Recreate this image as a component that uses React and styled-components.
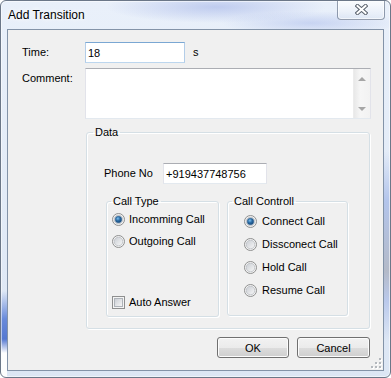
import React, { useId } from "react";
import styled, { createGlobalStyle, css } from "styled-components";

const GlobalStyle = createGlobalStyle`
  html, body { margin: 0; padding: 0; }
  body { background: #ffffff; font-family: "Liberation Sans", Arial, sans-serif; }
  * { box-sizing: border-box; }
`;

const Window = styled.div`
  width: 391px;
  height: 378px;
  border: 1px solid #6b7788;
  border-radius: 6px;
  overflow: hidden;
  display: flex;
  flex-direction: column;
  background:
    linear-gradient(180deg, rgba(255,255,255,0) 290px, rgba(84,122,214,0.85) 318px, rgba(70,108,205,0.9) 338px, rgba(255,255,255,0.95) 352px) 0 0 / 6px 100% no-repeat,
    linear-gradient(180deg, rgba(255,255,255,0) 150px, rgba(140,165,225,0.55) 200px, rgba(150,155,170,0.6) 270px, rgba(150,170,225,0.5) 300px, rgba(255,255,255,0) 340px) 100% 0 / 6px 100% no-repeat,
    radial-gradient(ellipse 110px 16px at 215px 6px, rgba(150,168,228,0.5), rgba(150,168,228,0)),
    radial-gradient(ellipse 90px 12px at 310px 22px, rgba(160,178,232,0.45), rgba(160,178,232,0)),
    linear-gradient(180deg, #e9f0fa 0%, #dce6f4 100%);
  box-shadow: inset 0 0 0 1px rgba(255,255,255,0.55);
`;

const TitleBar = styled.div`
  height: 28px;
  flex: none;
  display: flex;
  align-items: center;
  justify-content: space-between;
  padding-left: 7px;
`;

const Title = styled.span`
  font-size: 12px;
  line-height: 15px;
  color: #000;
  text-shadow: 0 0 7px #fff, 0 0 4px #fff;
`;

const CloseButton = styled.div`
  align-self: flex-start;
  margin-top: -1px;
  margin-right: 5px;
  width: 48px;
  height: 20px;
  border: 1px solid rgba(80, 95, 120, 0.6);
  border-top: none;
  border-radius: 0 0 4px 4px;
  background: linear-gradient(180deg, rgba(255,255,255,0.8), rgba(222,231,244,0.65));
  box-shadow: inset 0 0 0 1px rgba(255,255,255,0.6);
  display: flex;
  align-items: center;
  justify-content: center;
`;

const Client = styled.div`
  position: relative;
  flex: 1;
  margin: 0 6px 6px;
  border: 1px solid #8393a8;
  background: #f0f0f0;
  padding: 12px 13px 0 14px;
  display: flex;
  flex-direction: column;
  font-size: 11px;
  color: #000;
`;

const FieldRow = styled.div`
  display: flex;
  align-items: ${(p) => (p.$top ? "flex-start" : "center")};
  margin-top: ${(p) => p.$mt || 0}px;
`;

const Label = styled.span`
  flex: none;
  width: ${(p) => p.$w}px;
  padding-top: ${(p) => p.$pt || 0}px;
  font-size: 11px;
  line-height: 13px;
  white-space: nowrap;
`;

const Unit = styled.span`
  margin-left: 8px;
  font-size: 11px;
  line-height: 13px;
`;

const TextBox = styled.input`
  flex: none;
  width: ${(p) => p.$w}px;
  height: ${(p) => p.$h}px;
  margin: 0;
  padding: 0 2px;
  border: 1px solid;
  border-color: #abadb3 #e2e3ea #e3e9ef #e2e3ea;
  background: #fff;
  font: 11px "Liberation Sans", Arial, sans-serif;
  color: #000;
  outline: none;
  ${(p) =>
    p.$focused &&
    css`
      border-color: #7aa7d3 #b3cde8 #bcd6ee #b3cde8;
    `}
`;

const CommentBox = styled.div`
  flex: none;
  width: 286px;
  height: 51px;
  border: 1px solid;
  border-color: #abadb3 #e2e3ea #e3e9ef #e2e3ea;
  background: #fff;
  display: flex;
  justify-content: flex-end;
`;

const ScrollBar = styled.div`
  width: 17px;
  height: 100%;
  background: linear-gradient(90deg, #e8e8e8, #f6f6f6 40%, #f2f2f2);
  border-left: 1px solid #ececec;
  display: flex;
  flex-direction: column;
  justify-content: space-between;
  align-items: center;
  padding: 8px 0 7px;
`;

const Arrow = styled.span`
  width: 0;
  height: 0;
  border-left: 4px solid transparent;
  border-right: 4px solid transparent;
  ${(p) =>
    p.$down
      ? css`border-top: 4px solid #a6a6a6;`
      : css`border-bottom: 4px solid #a6a6a6;`}
`;

const GroupBox = styled.fieldset`
  flex: none;
  margin: ${(p) => p.$margin || 0};
  padding: 0;
  min-width: 0;
  width: ${(p) => p.$w}px;
  border: 1px solid #d5dfe5;
  border-radius: 3px;
  box-shadow: inset 1px 1px 0 #ffffff, 1px 1px 0 #ffffff;
`;

const Legend = styled.legend`
  margin-left: ${(p) => p.$ml}px;
  padding: 0 2px;
  font-size: 11px;
  line-height: 13px;
  color: #000;
`;

const GroupBody = styled.div`
  display: flex;
  flex-direction: column;
  padding: ${(p) => p.$pad};
  height: ${(p) => (p.$h ? `${p.$h}px` : "auto")};
  gap: ${(p) => p.$gap || 0}px;
`;

const GroupsRow = styled.div`
  display: flex;
  align-items: flex-start;
  gap: 8px;
  margin: 11px 0 0 2px;
`;

const OptionRow = styled.label`
  display: flex;
  align-items: center;
  height: 16px;
  gap: ${(p) => p.$gap}px;
  font-size: 11px;
  line-height: 13px;
  white-space: nowrap;
  ${(p) =>
    p.$bottom &&
    css`
      margin-top: auto;
    `}
`;

const CheckFrame = styled.span`
  flex: none;
  width: 13px;
  height: 13px;
  border: 1px solid #8e8f8f;
  background: #f4f4f4;
  padding: 1px;
  display: flex;
`;

const CheckInner = styled.span`
  flex: 1;
  border: 1px solid #aeb3b9;
  background: linear-gradient(135deg, #cbcfd5, #f6f6f6);
`;

const ButtonRow = styled.div`
  display: flex;
  justify-content: flex-end;
  gap: 8px;
  margin-top: 8px;
`;

const Button = styled.button`
  width: ${(p) => p.$w}px;
  height: 21px;
  margin: 0;
  padding: 0;
  border: 1px solid #707070;
  border-radius: 3px;
  background: linear-gradient(180deg, #f2f2f2 0%, #ebebeb 50%, #dddddd 50%, #cfcfcf 100%);
  box-shadow: inset 0 0 0 1px #fcfcfc;
  font: 11px "Liberation Sans", Arial, sans-serif;
  color: #000;
`;

const Grip = styled.div`
  position: absolute;
  right: 1px;
  bottom: 1px;
  line-height: 0;
`;

function RadioMark({ checked }) {
  const id = useId().replace(/:/g, "");
  return (
    <svg width="13" height="13" viewBox="0 0 13 13" style={{ flex: "none" }}>
      <defs>
        <linearGradient id={`f${id}`} x1="0" y1="0" x2="1" y2="1">
          <stop offset="0" stopColor="#c9cdd3" />
          <stop offset="1" stopColor="#f8f8f8" />
        </linearGradient>
        <radialGradient id={`d${id}`} cx="0.4" cy="0.35" r="0.75">
          <stop offset="0" stopColor="#7fc0ee" />
          <stop offset="0.45" stopColor="#2a6ca6" />
          <stop offset="1" stopColor="#163f6d" />
        </radialGradient>
      </defs>
      <circle cx="6.5" cy="6.5" r="6" fill="#f4f4f4" stroke="#8e8f8f" />
      <circle cx="6.5" cy="6.5" r="4.3" fill={`url(#f${id})`} stroke="#b9bdc2" strokeWidth="0.8" />
      {checked && <circle cx="6.5" cy="6.5" r="3.2" fill={`url(#d${id})`} stroke="#2a5f91" strokeWidth="0.6" />}
    </svg>
  );
}

function Radio({ checked, label, gap }) {
  return (
    <OptionRow $gap={gap}>
      <RadioMark checked={checked} />
      {label}
    </OptionRow>
  );
}

export default function App() {
  return (
    <>
      <GlobalStyle />
      <Window>
        <TitleBar>
          <Title>Add Transition</Title>
          <CloseButton>
            <svg width="13" height="11" viewBox="0 0 13 11">
              <path d="M2.5 2 L10.5 9 M10.5 2 L2.5 9" stroke="#5b636e" strokeWidth="4" strokeLinecap="square" fill="none" />
              <path d="M2.5 2 L10.5 9 M10.5 2 L2.5 9" stroke="#ffffff" strokeWidth="2" strokeLinecap="square" fill="none" />
            </svg>
          </CloseButton>
        </TitleBar>
        <Client>
          <FieldRow>
            <Label $w={63}>Time:</Label>
            <TextBox $w={100} $h={21} $focused readOnly value="18" />
            <Unit>s</Unit>
          </FieldRow>
          <FieldRow $top $mt={5}>
            <Label $w={63} $pt={4}>Comment:</Label>
            <CommentBox>
              <ScrollBar>
                <Arrow />
                <Arrow $down />
              </ScrollBar>
            </CommentBox>
          </FieldRow>
          <GroupBox $w={284} $margin="7px 0 0 64px">
            <Legend $ml={6}>Data</Legend>
            <GroupBody $pad="24px 0 11px 17px">
              <FieldRow>
                <Label $w={59}>Phone No</Label>
                <TextBox $w={104} $h={21} readOnly value="+919437748756" />
              </FieldRow>
              <GroupsRow>
                <GroupBox $w={113}>
                  <Legend $ml={4}>Call Type</Legend>
                  <GroupBody $pad="3px 0 6px 5px" $h={108} $gap={6}>
                    <Radio checked gap={4} label="Incomming Call" />
                    <Radio gap={4} label="Outgoing Call" />
                    <OptionRow $gap={4} $bottom>
                      <CheckFrame>
                        <CheckInner />
                      </CheckFrame>
                      Auto Answer
                    </OptionRow>
                  </GroupBody>
                </GroupBox>
                <GroupBox $w={121}>
                  <Legend $ml={4}>Call Controll</Legend>
                  <GroupBody $pad="5px 0 0 16px" $h={107} $gap={7}>
                    <Radio checked gap={5} label="Connect Call" />
                    <Radio gap={5} label="Dissconect Call" />
                    <Radio gap={5} label="Hold Call" />
                    <Radio gap={5} label="Resume Call" />
                  </GroupBody>
                </GroupBox>
              </GroupsRow>
            </GroupBody>
          </GroupBox>
          <ButtonRow>
            <Button $w={72}>OK</Button>
            <Button $w={73}>Cancel</Button>
          </ButtonRow>
          <Grip>
            <svg width="12" height="12" viewBox="0 0 12 12">
              {[[9, 1], [5, 5], [9, 5], [1, 9], [5, 9], [9, 9]].map(([x, y]) => (
                <g key={`${x}-${y}`}>
                  <rect x={x + 1} y={y + 1} width="2" height="2" fill="#ffffff" />
                  <rect x={x} y={y} width="2" height="2" fill="#b4b8bd" />
                </g>
              ))}
            </svg>
          </Grip>
        </Client>
      </Window>
    </>
  );
}
